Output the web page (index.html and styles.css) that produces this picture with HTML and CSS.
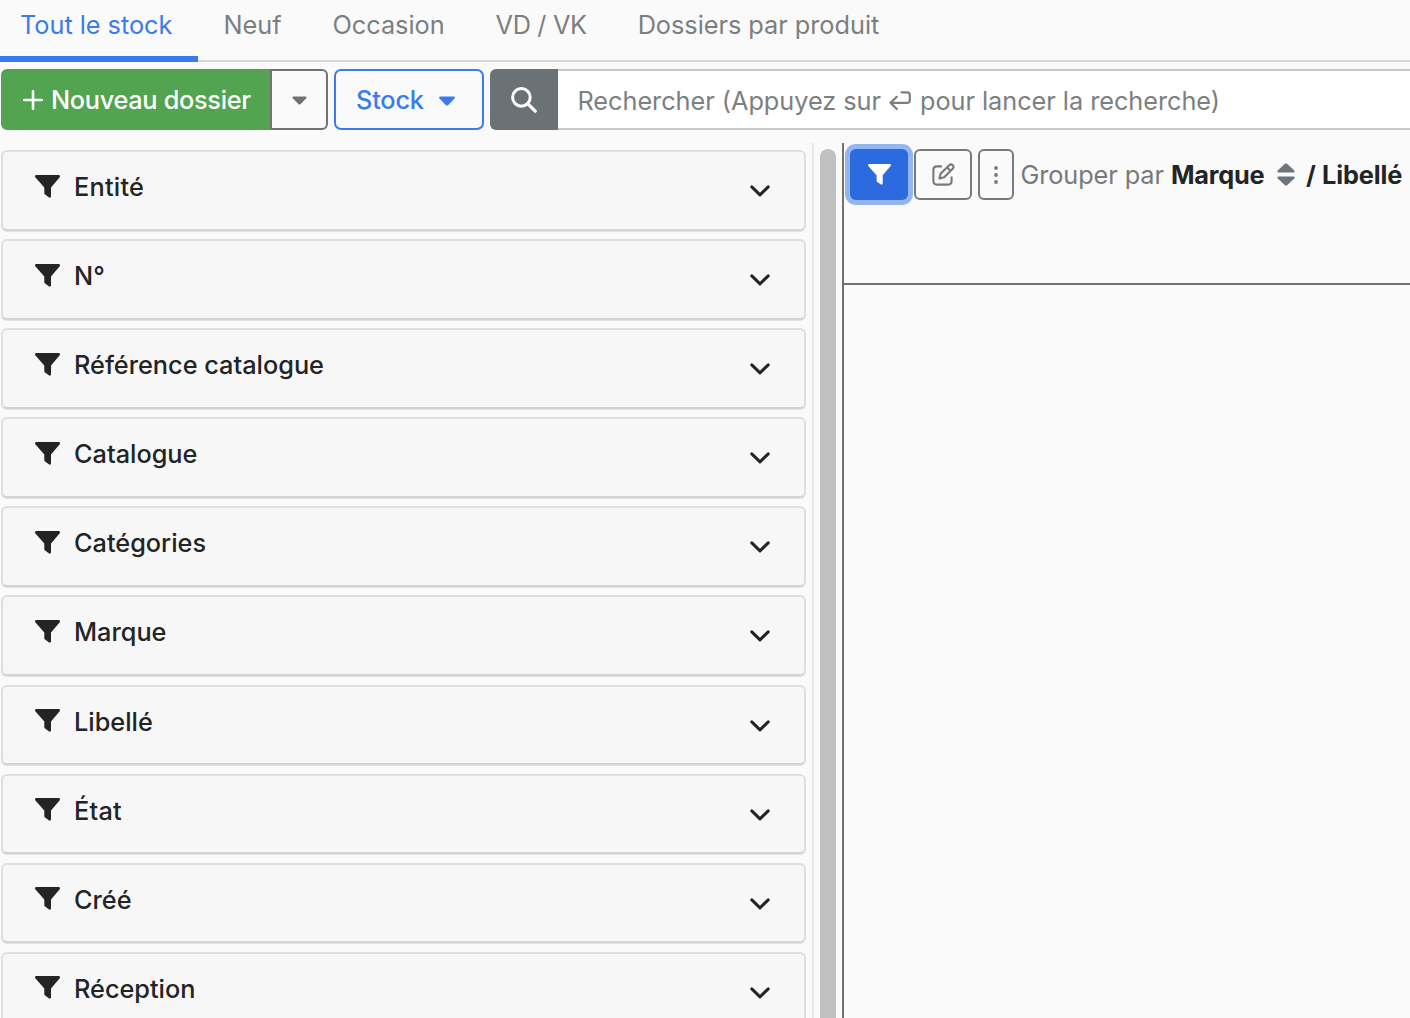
FILE: index.html
```html
<!DOCTYPE html>
<html lang="fr">
<head>
<meta charset="utf-8">
<title>Stock</title>
<link rel="stylesheet" href="styles.css">
</head>
<body>
<svg class="sprite" aria-hidden="true">
  <symbol id="funnel" viewBox="0 0 25 23"><path d="M1.4 0H23.6C25 0 25.4 1.5 24.5 2.6L16 12.4V21.2C16 22.6 14.9 23 13.8 22.3L10.1 19.6C9.6 19.2 9.3 18.7 9.3 18V12.4L.5 2.6C-.4 1.5 0 0 1.4 0Z" fill="currentColor"/></symbol>
  <symbol id="chevron" viewBox="0 0 20 12"><path d="M1.8 1.9L10 9.8L18.2 1.9" fill="none" stroke="currentColor" stroke-width="3" stroke-linecap="round" stroke-linejoin="round"/></symbol>
  <symbol id="caret" viewBox="0 0 16 10"><path d="M1.3.5H14.7C15.8.5 16.2 1.7 15.5 2.5L9.3 8.9C8.5 9.7 7.5 9.7 6.7 8.9L.5 2.5C-.2 1.7.2.5 1.3.5Z" fill="currentColor"/></symbol>
</svg>

<nav class="tabs">
  <a class="tab active">Tout le stock</a>
  <a class="tab">Neuf</a>
  <a class="tab">Occasion</a>
  <a class="tab tight">VD / VK</a>
  <a class="tab">Dossiers par produit</a>
</nav>

<div class="toolbar">
  <div class="split">
    <button class="btn new"><svg class="plus" viewBox="0 0 20 20"><path d="M10 1.2V18.8M1.2 10H18.8" fill="none" stroke="currentColor" stroke-width="2.6" stroke-linecap="round"/></svg><span>Nouveau dossier</span></button>
    <button class="btn more"><svg class="caret small"><use href="#caret"/></svg></button>
  </div>
  <button class="btn stock"><span>Stock</span><svg class="caret"><use href="#caret"/></svg></button>
  <div class="search">
    <div class="search-icon"><svg class="glass" viewBox="0 0 26 26"><circle cx="10.4" cy="10.4" r="8.8" fill="none" stroke="currentColor" stroke-width="3"/><path d="M16.7 16.7L24.2 24.2" stroke="currentColor" stroke-width="3.2" stroke-linecap="round"/></svg></div>
    <div class="search-field"><span>Rechercher (Appuyez sur</span><svg class="enter" viewBox="0 0 22 20"><path d="M12.5 1.3H18.2Q20.8 1.3 20.8 3.9V9.2Q20.8 11.9 18.2 11.9H1.5M7.8 5.8L1.5 11.9L7.8 18" fill="none" stroke="currentColor" stroke-width="2.2" stroke-linecap="round" stroke-linejoin="round"/></svg><span>pour lancer la recherche)</span></div>
  </div>
</div>

<main class="content">
  <aside class="filters">
    <div class="card"><svg class="funnel"><use href="#funnel"/></svg><span class="wide">Entité</span><svg class="chevron"><use href="#chevron"/></svg></div>
    <div class="card"><svg class="funnel"><use href="#funnel"/></svg><span>N°</span><svg class="chevron"><use href="#chevron"/></svg></div>
    <div class="card"><svg class="funnel"><use href="#funnel"/></svg><span>Référence catalogue</span><svg class="chevron"><use href="#chevron"/></svg></div>
    <div class="card"><svg class="funnel"><use href="#funnel"/></svg><span>Catalogue</span><svg class="chevron"><use href="#chevron"/></svg></div>
    <div class="card"><svg class="funnel"><use href="#funnel"/></svg><span>Catégories</span><svg class="chevron"><use href="#chevron"/></svg></div>
    <div class="card"><svg class="funnel"><use href="#funnel"/></svg><span>Marque</span><svg class="chevron"><use href="#chevron"/></svg></div>
    <div class="card"><svg class="funnel"><use href="#funnel"/></svg><span>Libellé</span><svg class="chevron"><use href="#chevron"/></svg></div>
    <div class="card"><svg class="funnel"><use href="#funnel"/></svg><span class="wide">État</span><svg class="chevron"><use href="#chevron"/></svg></div>
    <div class="card"><svg class="funnel"><use href="#funnel"/></svg><span>Créé</span><svg class="chevron"><use href="#chevron"/></svg></div>
    <div class="card"><svg class="funnel"><use href="#funnel"/></svg><span>Réception</span><svg class="chevron"><use href="#chevron"/></svg></div>
  </aside>
  <div class="scroll-track"><div class="scroll-thumb"></div></div>
  <section class="results">
    <header class="results-head">
      <button class="tool filter"><svg class="funnel"><use href="#funnel"/></svg></button>
      <button class="tool edit"><svg class="pen" viewBox="0 0 23 23"><path d="M9.2 3.4H5Q1.4 3.4 1.4 7V18Q1.4 21.6 5 21.6H16Q19.6 21.6 19.6 18V14.4M7.4 15.6L8.6 10.8L17.2 2.2Q19 .6 20.7 2.2Q22.4 3.9 20.7 5.8L12.2 14.3ZM15.2 4.4L18.6 7.8" fill="none" stroke="currentColor" stroke-width="2.1" stroke-linecap="round" stroke-linejoin="round"/></svg></button>
      <button class="tool dots"><svg viewBox="0 0 4 18"><circle cx="2" cy="2" r="1.9"/><circle cx="2" cy="9" r="1.9"/><circle cx="2" cy="16" r="1.9"/></svg></button>
      <span class="group-by">Grouper par</span>
      <strong class="group-brand">Marque</strong>
      <svg class="sort" viewBox="0 0 18 23"><path d="M8 .7Q9 -.2 10 .7L17.3 7.6Q18.2 9.4 16.6 9.6H1.4Q-.2 9.4.7 7.6ZM8 22.3Q9 23.2 10 22.3L17.3 15.4Q18.2 13.6 16.6 13.4H1.4Q-.2 13.6.7 15.4Z" fill="currentColor"/></svg>
      <strong class="slash">/</strong>
      <strong class="group-label">Libellé</strong>
    </header>
  </section>
</main>
</body>
</html>
```

FILE: styles.css
```css
* { box-sizing: border-box; }

body {
  margin: 0;
  height: 1018px;
  overflow: hidden;
  display: flex;
  flex-direction: column;
  background: #fafafa;
  color: #222425;
  font: 400 25.3px/32px Inter, "Liberation Sans", sans-serif;
  white-space: nowrap;
}

.sprite { display: none; }
svg { flex: none; display: block; }
button { font: inherit; margin: 0; padding: 0; background: none; }

/* Tabs */
.tabs {
  display: flex;
  height: 62px;
  flex: none;
  border-bottom: 2px solid #d6d8d8;
  color: #7c7f80;
}
.tab { height: 62px; padding: 9px 25.5px 0; letter-spacing: -.03px; }
.tab.tight { letter-spacing: -.35px; }
.tab.active {
  width: 198px;
  padding-left: 20px;
  color: #3b7bec;
  border-bottom: 6px solid #387af2;
}

/* Toolbar */
.toolbar {
  display: flex;
  flex: none;
  height: 81px;
  padding: 7px 0 13px 1px;
  gap: 6px;
}
.split { display: flex; width: 327px; }
.btn {
  display: flex;
  align-items: center;
  border: 2px solid;
}
.new {
  width: 269px;
  padding-left: 20px;
  gap: 8px;
  color: #fff;
  background: #52a450;
  border-color: #52a450;
  border-radius: 6px 0 0 6px;
  font-weight: 500;
  letter-spacing: -.3px;
}
.plus { width: 20px; height: 20px; }
.more {
  width: 58px;
  justify-content: center;
  color: #707273;
  border-radius: 0 6px 6px 0;
}
.caret { width: 16px; height: 10px; margin-top: 2px; }
.caret.small { width: 15px; height: 9px; margin-top: 1px; }
.stock {
  width: 150px;
  padding-left: 20px;
  gap: 15px;
  color: #3b7bec;
  border-radius: 7px;
  font-weight: 500;
  letter-spacing: -.2px;
}
.search { display: flex; flex: 1; }
.search-icon {
  width: 68px;
  display: flex;
  align-items: center;
  justify-content: center;
  color: #fff;
  background: #6b7276;
  border-radius: 6px 0 0 6px;
}
.glass { width: 26px; height: 26px; }
.search-field {
  flex: 1;
  display: flex;
  align-items: center;
  padding: 3px 0 0 19.5px;
  color: #7c7f80;
  background: #fff;
  border: solid #c6c8c9;
  border-width: 2px 0;
  letter-spacing: -.04px;
}
.enter { width: 22px; height: 20px; margin: 0 9px 0 8px; }

/* Filter panel */
.content { display: flex; flex: 1; min-height: 0; }
.filters {
  width: 814px;
  flex: none;
  padding: 7px 6px 0 1px;
  border-right: 2px solid #e7e8e8;
  overflow: hidden;
}
.card {
  display: flex;
  align-items: flex-start;
  height: 80.5px;
  margin-bottom: 8.6px;
  padding: 19px 34px 0 32px;
  background: #f7f7f7;
  border: 2px solid #dedfdf;
  border-bottom-color: #d3d4d4;
  border-radius: 6px;
  box-shadow: 0 1px 0 #e0e1e1;
  font-weight: 500;
}
.wide { letter-spacing: .25px; }
.funnel { width: 25px; height: 23px; }
.card .funnel { margin: 3.5px 14px 0 0; }
.chevron { width: 20px; height: 12px; margin: 14px 0 0 auto; }

.scroll-track { width: 28px; flex: none; padding: 6px 0 0 6px; }
.scroll-thumb {
  width: 16px;
  height: 900px;
  background: #c1c1c1;
  border-radius: 8px;
}

/* Results */
.results { flex: 1; border-left: 2px solid #707273; min-width: 0; }
.results-head {
  display: flex;
  height: 142px;
  padding: 6px 0 0 6px;
  border-bottom: 2px solid #707273;
}
.tool {
  display: flex;
  align-items: center;
  justify-content: center;
  height: 51px;
  border: 2px solid #77797a;
  border-radius: 6px;
  color: #77797a;
  flex: none;
}
.tool.filter {
  width: 58px;
  border: 0;
  color: #fff;
  background: #2c6adf;
  box-shadow: 0 0 0 5px #95b5f1;
}
.filter .funnel { width: 23px; height: 21px; }
.filter .funnel { overflow: visible; }
.edit { width: 58px; margin-left: 6px; }
.pen { width: 23px; height: 23px; margin-top: -1px; }
.dots { width: 36px; margin-left: 6px; }
.dots svg { width: 4px; height: 18px; fill: #77797a; }
.results-head span, .results-head strong { padding-top: 10px; flex: none; }
.results-head strong { font-weight: 700; letter-spacing: -.1px; }
.group-by { width: 157px; padding-left: 6.5px; color: #77797a; letter-spacing: -.1px; }
.results-head .group-brand { width: 106px; letter-spacing: -.25px; }
.sort { width: 18px; height: 23px; margin-top: 14px; color: #6e7578; }
.slash { width: 27px; padding-left: 11px; }
```
